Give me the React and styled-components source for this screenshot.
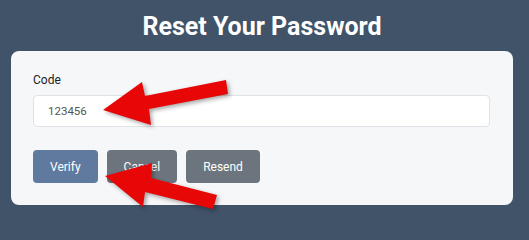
import React from "react";
import styled, { createGlobalStyle } from "styled-components";

const GlobalStyle = createGlobalStyle`
  *, *::after, *::before {
    box-sizing: border-box;
  }

  body {
    margin: 0;
    font-family: Roboto, "Liberation Sans", Arial, sans-serif;
    background: #415369;
  }
`;

const Page = styled.div`
  position: relative;
  height: 224px;
  padding: 12px 16px 0 11px;
  background: #415369;
  overflow: hidden;
`;

const Title = styled.h1`
  margin: 0 0 10px;
  font-size: 25px;
  line-height: 29px;
  font-weight: 700;
  color: #ffffff;
  text-align: center;
`;

const Card = styled.div`
  background: #f6f7f9;
  border-radius: 8px;
  padding: 22px 23px 22px 22px;
`;

const Label = styled.label`
  display: block;
  margin-bottom: 7px;
  font-size: 12px;
  line-height: 15px;
  color: #222;
`;

const Input = styled.input`
  display: block;
  width: 100%;
  height: 32px;
  padding: 0 14px;
  border: 1px solid #dfe2e6;
  border-radius: 4px;
  background: #fff;
  font-family: inherit;
  font-size: 11.5px;
  color: #555;
  outline: none;
`;

const Actions = styled.div`
  display: flex;
  gap: 9px;
  margin-top: 23px;
`;

const Button = styled.button`
  height: 33px;
  padding: 0 17px;
  border: none;
  border-radius: 4px;
  background: ${(props) => (props.$primary ? "#5f7a9e" : "#6c757d")};
  color: #fff;
  font-family: inherit;
  font-size: 12px;
  cursor: pointer;
`;

const Overlay = styled.svg`
  position: absolute;
  left: 0;
  top: 0;
  width: 529px;
  height: 224px;
  pointer-events: none;
  filter: drop-shadow(2px 2px 2px rgba(0, 0, 0, 0.35));
`;

export default function App() {
  return (
    <>
      <GlobalStyle />
      <Page>
        <Title>Reset Your Password</Title>
        <Card>
          <Label htmlFor="code">Code</Label>
          <Input id="code" defaultValue="123456" />
          <Actions>
            <Button $primary>Verify</Button>
            <Button>Cancel</Button>
            <Button>Resend</Button>
          </Actions>
        </Card>
        <Overlay viewBox="0 0 529 224">
          <polygon
            fill="#e80707"
            points="103,110 142,82 145,96 226,80 228,94 149,109 151,125"
          />
          <polygon
            fill="#e80707"
            points="105,176 152,163 151,178 217,195 213,209 145,192 143,207"
          />
        </Overlay>
      </Page>
    </>
  );
}
